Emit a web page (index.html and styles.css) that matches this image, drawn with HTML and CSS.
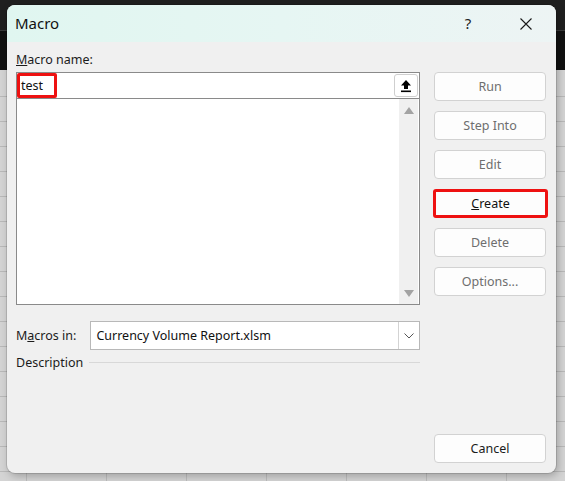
FILE: index.html
```html
<!DOCTYPE html>
<html lang="en">
<head>
<meta charset="utf-8">
<title>Macro</title>
<link rel="stylesheet" href="styles.css">
</head>
<body>
<div class="sheet"></div>
<div class="dialog">
  <div class="titlebar">
    <span class="title">Macro</span>
    <span class="help">?</span>
    <span class="close">
      <svg width="12" height="12" viewBox="0 0 12 12"><path d="M0.5 0.5 L11.5 11.5 M11.5 0.5 L0.5 11.5" stroke="#1a1a1a" stroke-width="1.1" fill="none"/></svg>
    </span>
  </div>
  <div class="body">
    <div class="left">
      <label class="label"><u>M</u>acro name:</label>
      <div class="namebox">
        <div class="nameinput">
          <span class="nametext">test</span>
          <span class="highlight name-hl"></span>
          <span class="upbtn">
            <svg width="12" height="14" viewBox="0 0 12 14"><path d="M6 1 L11 6.5 L8 6.5 L8 10 L4 10 L4 6.5 L1 6.5 Z" fill="#000"/><rect x="1" y="11.5" width="10" height="1.6" fill="#000"/></svg>
          </span>
        </div>
        <div class="listbox">
          <div class="listarea"></div>
          <div class="vscroll">
            <svg width="10" height="7" viewBox="0 0 10 7"><path d="M5 0 L10 7 L0 7 Z" fill="#a3a3a3"/></svg>
            <svg width="10" height="7" viewBox="0 0 10 7"><path d="M0 0 L10 0 L5 7 Z" fill="#a3a3a3"/></svg>
          </div>
        </div>
      </div>
      <div class="inrow">
        <span class="label">M<u>a</u>cros in:</span>
        <div class="combo">
          <span class="combotext">Currency Volume Report.xlsm</span>
          <span class="chev">
            <svg width="10" height="6" viewBox="0 0 10 6"><path d="M0.5 0.5 L5 5 L9.5 0.5" stroke="#555" stroke-width="1" fill="none"/></svg>
          </span>
        </div>
      </div>
      <div class="descrow">
        <span class="label">Description</span>
        <span class="rule"></span>
      </div>
    </div>
    <div class="right">
      <button class="btn dis">Run</button>
      <button class="btn dis">Step Into</button>
      <button class="btn dis">Edit</button>
      <button class="btn create"><u>C</u>reate</button>
      <button class="btn dis">Delete</button>
      <button class="btn dis">Options...</button>
      <button class="btn cancel">Cancel</button>
    </div>
  </div>
</div>
</body>
</html>
```
FILE: styles.css
```css
html, body {
  margin: 0;
  padding: 0;
}

body {
  width: 565px;
  height: 481px;
  overflow: hidden;
  position: relative;
  font-family: "Noto Sans", "Open Sans", sans-serif;
  font-size: 12.5px;
  color: #1b1b1b;
  background: #d2d2d2;
}

/* spreadsheet behind the dialog */
.sheet {
  position: absolute;
  inset: 0;
  background:
    linear-gradient(#1f1f1f 0, #1f1f1f 30px, #3a3a3a 30px, #3a3a3a 31px, #111 31px, #111 70px, transparent 70px),
    repeating-linear-gradient(180deg, transparent 0, transparent 24px, #b9b9b9 24px, #b9b9b9 25px),
    repeating-linear-gradient(90deg, transparent 0, transparent 26px, #bdbdbd 26px, #bdbdbd 27px, transparent 27px, transparent 80px);
  background-color: #d4d4d4;
  background-position: 0 0, 0 72px, 0 0;
}

.dialog {
  position: absolute;
  left: 7px;
  top: 5px;
  width: 549px;
  height: 468px;
  border-radius: 8px;
  background: #f0f0f0;
  overflow: hidden;
  box-shadow: 0 0 0 1px rgba(0,0,0,0.12), 2px 3px 8px rgba(0,0,0,0.25);
  display: flex;
  flex-direction: column;
}

.titlebar {
  height: 37px;
  flex: none;
  display: flex;
  align-items: center;
  background: linear-gradient(90deg, #e0f6f0 0%, #e6f6f3 50%, #edf4f4 100%);
  padding-left: 8px;
}

.title {
  font-size: 15px;
  color: #111;
  flex: 1;
  padding-bottom: 1px;
}

.help {
  font-size: 15px;
  color: #222;
  width: 20px;
  text-align: center;
  margin-right: 42px;
  padding-bottom: 1px;
}

.close {
  width: 12px;
  height: 12px;
  margin-right: 24px;
  display: flex;
}

.body {
  flex: 1;
  display: flex;
  gap: 14px;
  padding: 10px 10px 10px 9px;
}

.left {
  width: 404px;
  display: flex;
  flex-direction: column;
}

.label {
  line-height: 16px;
  color: #1b1b1b;
}

.left > .label {
  margin-bottom: 4px;
}

.namebox {
  border: 1px solid #8a8a8a;
  background: #fff;
  display: flex;
  flex-direction: column;
}

.nameinput {
  height: 25px;
  border-bottom: 1px solid #8a8a8a;
  display: flex;
  align-items: center;
  position: relative;
}

.nametext {
  padding-left: 4px;
  flex: 1;
  color: #111;
}

.highlight {
  position: absolute;
  border: 3px solid #ee1111;
  border-radius: 2px;
}

.name-hl {
  left: 0;
  top: 0;
  width: 34px;
  height: 19px;
}

.upbtn {
  width: 24px;
  height: 23px;
  margin-right: 1px;
  border: 1px solid #cfcfcf;
  border-radius: 3px;
  background: #fff;
  display: flex;
  align-items: center;
  justify-content: center;
  box-sizing: border-box;
}

.listbox {
  height: 205px;
  display: flex;
}

.listarea {
  flex: 1;
}

.vscroll {
  width: 19px;
  margin-right: 1px;
  background: #f0f0f0;
  display: flex;
  flex-direction: column;
  justify-content: space-between;
  align-items: center;
  padding: 8px 0 7px;
}

.inrow {
  margin-top: 16px;
  display: flex;
  align-items: center;
  gap: 14px;
}

.combo {
  flex: 1;
  height: 27px;
  border: 1px solid #b8b8b8;
  background: #fff;
  display: flex;
  align-items: center;
}

.combotext {
  flex: 1;
  padding-left: 5px;
  color: #111;
}

.chev {
  width: 20px;
  height: 27px;
  border-left: 1px solid #d3d3d3;
  display: flex;
  align-items: center;
  justify-content: center;
}

.descrow {
  margin-top: 5px;
  display: flex;
  align-items: center;
  gap: 6px;
}

.rule {
  flex: 1;
  height: 1px;
  background: #d8d8d8;
  margin-top: -2px;
}

.right {
  width: 112px;
  display: flex;
  flex-direction: column;
  gap: 10px;
  padding-top: 20px;
}

.btn {
  height: 29px;
  flex: none;
  border: 1px solid #d2d2d2;
  border-radius: 4px;
  background: #fdfdfd;
  font-family: inherit;
  font-size: 12.5px;
  color: #1b1b1b;
  padding: 0;
}

.btn.dis {
  color: #6e6e6e;
}

.btn.create {
  border: 3px solid #ee1111;
  border-radius: 3px;
  margin: 0 -2px 0 -1px;
  color: #111;
}

.btn.cancel {
  margin-top: auto;
}
```
